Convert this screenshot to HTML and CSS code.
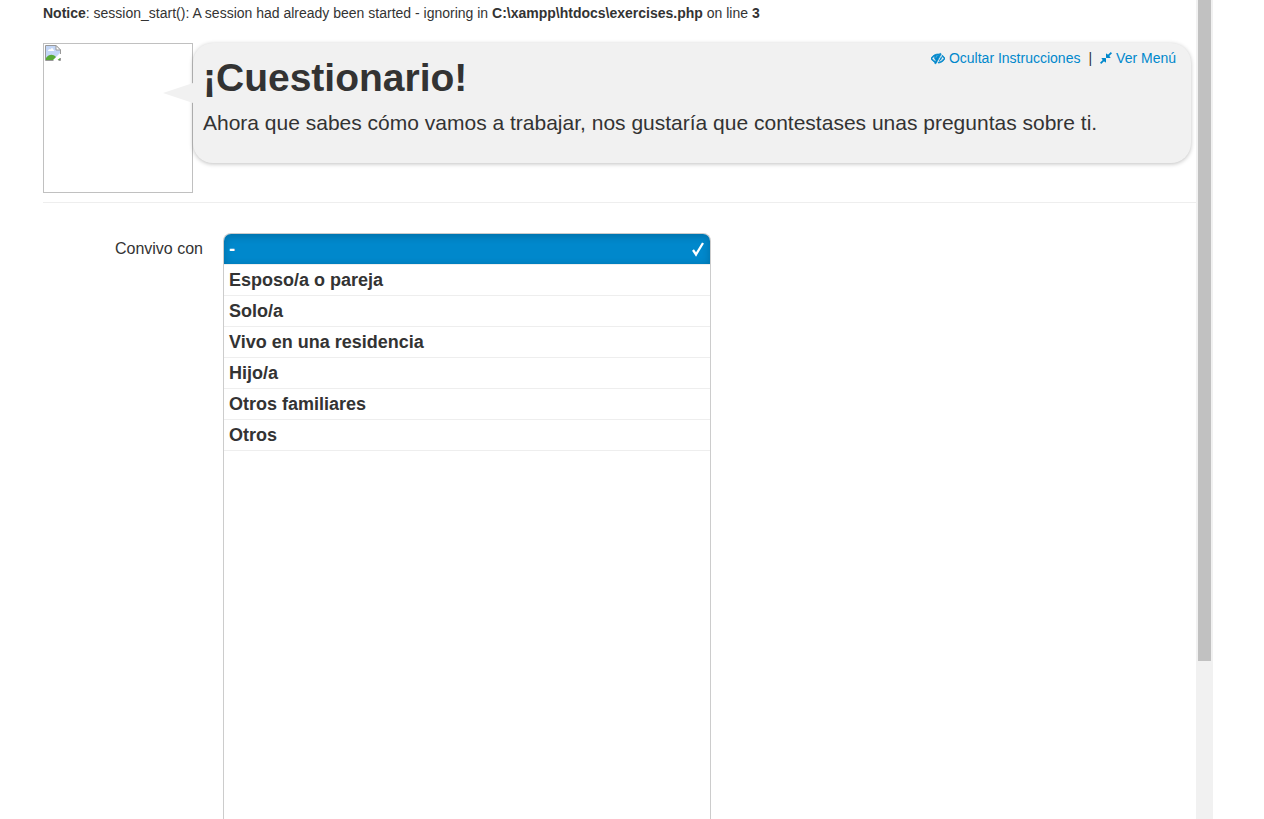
FILE: index.html
```html
<!DOCTYPE html>
<html lang="es">
<head>
<meta charset="utf-8">
<title>¡Cuestionario!</title>
<link rel="stylesheet" href="styles.css">
</head>
<body>
<main class="page">
  <p class="notice"><b>Notice</b>: session_start(): A session had already been started - ignoring in <b>C:\xampp\htdocs\exercises.php</b> on line <b>3</b></p>
  <header class="intro">
    <div class="avatar">
      <svg class="broken" viewBox="0 0 16 16" aria-hidden="true">
        <path d="M.5 15.500V.5h10.500l4.500 4.500v4M.5 15.500h8M15.500 13v2.500h-2" fill="none" stroke="#999"/>
        <path d="M1 1h10v4h4v3L8 15H1z" fill="#c3d6f6"/>
        <path d="M11 .5V5h4.500z" fill="#fff" stroke="#999"/>
        <path d="M3 6c0-2 2-2 2.500-1.500C6 2.500 8.500 3 8.500 5c1 0 1 1 .5 1z" fill="#fff"/>
        <path d="M1 15v-2c3-4 7-4 10-1l-3 3z" fill="#58aa36"/>
        <path d="M12.500 15l2.500-2v2z" fill="#58aa36"/>
      </svg>
    </div>
    <section class="bubble">
      <svg class="tail" viewBox="0 0 30 20" aria-hidden="true"><path d="M0 10L30 0v20z" fill="#f1f1f1"/></svg>
      <nav class="tools">
        <a href="#instrucciones"><svg class="icon" viewBox="0 0 1792 1792" aria-hidden="true"><path fill="currentColor" stroke="currentColor" stroke-width="90" d="M555 1335l78-141q-87-63-136-159t-49-203q0-121 61-225-229 117-381 353 167 258 427 375zm389-759q0-20-14-34t-34-14q-125 0-214.500 89.500t-89.500 214.500q0 20 14 34t34 14 34-14 14-34q0-86 61-147t147-61q20 0 34-14t14-34zm363-191q0 7-1 9-106 189-316 567t-315 566l-49 89q-10 16-28 16-12 0-134-70-16-10-16-28 0-12 44-87-143-65-263.500-173t-208.500-245q-20-31-20-69t20-69q153-235 380-371t496-136q89 0 180 17l54-97q10-16 28-16 5 0 18 6t31 15.500 33 18.500 31.500 18.500 19.500 11.500q16 10 16 27zm37 447q0 139-79 253.500t-209 164.500l280-502q8 45 8 84zm448 128q0 35-20 69-39 64-109 145-150 172-347.500 267t-419.500 95l74-132q212-18 392.500-137t301.500-307q-115-179-282-294l63-112q95 64 182.500 153t144.500 184q20 34 20 69z"/></svg>Ocultar Instrucciones</a>
        <span>|</span>
        <a href="#menu"><svg class="icon small" viewBox="128 128 1536 1536" aria-hidden="true"><path fill="currentColor" d="M896 960v448q0 26-19 45t-45 19-45-19l-144-144-332 332q-10 10-23 10t-23-10l-114-114q-10-10-10-23t10-23l332-332-144-144q-19-19-19-45t19-45 45-19h448q26 0 45 19t19 45zm755-672q0 13-10 23l-332 332 144 144q19 19 19 45t-19 45-45 19h-448q-26 0-45-19t-19-45v-448q0-26 19-45t45-19 45 19l144 144 332-332q10-10 23-10t23 10l114 114q10 10 10 23z"/></svg>Ver Menú</a>
      </nav>
      <h1>¡Cuestionario!</h1>
      <p class="lead">Ahora que sabes cómo vamos a trabajar, nos gustaría que contestases unas preguntas sobre ti.</p>
    </section>
  </header>
  <form class="question">
    <span class="caption" id="convivo">Convivo con</span>
    <div class="choices" role="radiogroup" aria-labelledby="convivo">
      <label class="choice"><input type="radio" name="convivo" checked><span>-</span><svg class="tick" viewBox="0 0 14 16" aria-hidden="true"><path d="M2 9l3 4.500L12 2" fill="none" stroke="currentColor" stroke-width="2.300"/></svg></label>
      <label class="choice"><input type="radio" name="convivo"><span>Esposo/a o pareja</span></label>
      <label class="choice"><input type="radio" name="convivo"><span>Solo/a</span></label>
      <label class="choice"><input type="radio" name="convivo"><span>Vivo en una residencia</span></label>
      <label class="choice"><input type="radio" name="convivo"><span>Hijo/a</span></label>
      <label class="choice"><input type="radio" name="convivo"><span>Otros familiares</span></label>
      <label class="choice"><input type="radio" name="convivo"><span>Otros</span></label>
    </div>
  </form>
</main>
<div class="scrollbar" aria-hidden="true"><div class="thumb"></div></div>
</body>
</html>
```
FILE: styles.css
```css
* { box-sizing: border-box; }
body {
  margin: 0;
  padding-right: 51px;
  display: flex;
  height: 100vh;
  overflow: hidden;
  background: #fff;
  color: #333;
  font: 14px/20px "Liberation Sans", Arial, sans-serif;
}
.page {
  flex: 1;
  min-width: 0;
  padding: 3px 0 0 43px;
  display: flex;
  flex-direction: column;
}
.notice { margin: 0 0 20px; }
.intro {
  display: flex;
  align-items: flex-start;
  padding-bottom: 9px;
  border-bottom: 1px solid #eee;
}
.avatar {
  flex: none;
  width: 150px;
  height: 150px;
  padding: 1px;
  border: 1px solid #c0c0c0;
}
.broken { display: block; width: 16px; height: 16px; }
.bubble {
  position: relative;
  flex: 1;
  min-height: 120px;
  margin-right: 5px;
  padding: 10px;
  border-radius: 20px;
  background: #f1f1f1;
  box-shadow: 0 1px 4px rgba(0, 0, 0, .25);
}
.tail {
  position: absolute;
  left: -30px;
  top: 40px;
  width: 30px;
  height: 20px;
}
.tools {
  position: absolute;
  top: 5px;
  right: 15px;
  display: flex;
  gap: 8px;
}
.tools a {
  display: flex;
  align-items: center;
  gap: 4px;
  color: #08c;
  text-decoration: none;
}
.icon { width: 14px; height: 14px; }
.icon.small { width: 12px; height: 12px; }
h1 { margin: 5px 0 15px; font-size: 39px; line-height: 40px; }
.lead { margin: 0; font-size: 21px; line-height: 20px; }
.question {
  flex: 1;
  min-height: 0;
  margin-top: 30px;
  display: flex;
  gap: 20px;
}
.caption {
  width: 160px;
  padding-top: 6px;
  font-size: 16px;
  text-align: right;
}
.choices {
  width: 488px;
  border: 1px solid #ccc;
  border-bottom: 0;
  border-radius: 8px 8px 0 0;
  overflow: hidden;
}
.choice {
  display: flex;
  align-items: center;
  justify-content: space-between;
  height: 31px;
  padding: 0 5px;
  border-bottom: 1px solid #eee;
  font-size: 18px;
  font-weight: bold;
}
.choice input { position: absolute; opacity: 0; }
.choice:has(input:checked) {
  background: #08c;
  color: #fff;
  box-shadow: inset 0 2px 8px rgba(0, 0, 0, .2);
}
.tick { width: 14px; height: 16px; }
.scrollbar { width: 17px; padding: 0 2px; background: #f1f1f1; }
.thumb { height: 661px; background: #c1c1c1; }
```
